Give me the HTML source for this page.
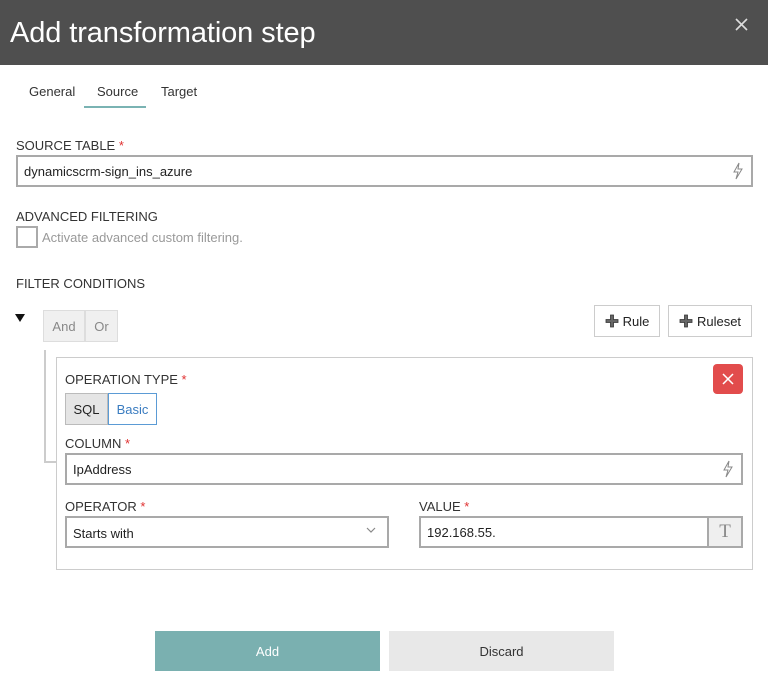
<!DOCTYPE html>
<html><head><style>
*{box-sizing:border-box;margin:0;padding:0}
body{width:768px;height:687px;background:#fff;font-family:"Liberation Sans",sans-serif;font-size:13px;color:#333;position:relative;overflow:hidden}
.a{position:absolute}
.lbl{position:absolute;font-size:13px;color:#333;letter-spacing:0}
.lbl b{color:#e03030;font-weight:normal}
.inp{position:absolute;border:2px solid #a9a9a9;background:#fff;font-size:13px;color:#222;padding-left:6px;display:flex;align-items:center}
.btn{position:absolute;border:1px solid #ccc;background:#fff;display:flex;align-items:center;justify-content:center;font-size:13px;color:#222}
</style></head><body>
<div class="a" style="left:0;top:0;width:768px;height:65px;background:#4f4f4f"></div>
<div class="a" style="left:10px;top:17px;font-size:29px;letter-spacing:-0.1px;color:#fff">Add transformation step</div>
<svg class="a" style="left:735px;top:18px" width="13" height="13"><path d="M1 1L12 12M12 1L1 12" stroke="#ddd" stroke-width="1.6"/></svg>

<div class="a" style="left:29px;top:84px;color:#333">General</div>
<div class="a" style="left:97px;top:84px;color:#333">Source</div>
<div class="a" style="left:161px;top:84px;color:#333">Target</div>
<div class="a" style="left:84px;top:106px;width:62px;height:2px;background:#7ab3b3"></div>

<div class="lbl" style="left:16px;top:138px">SOURCE TABLE <b>*</b></div>
<div class="inp" style="left:16px;top:155px;width:737px;height:32px">dynamicscrm-sign_ins_azure</div>
<svg class="a" style="left:732px;top:162px" width="12" height="18"><path d="M7 1L2 10H6L4 17L10 7H6Z" fill="none" stroke="#888" stroke-width="1"/></svg>

<div class="lbl" style="left:16px;top:209px">ADVANCED FILTERING</div>
<div class="a" style="left:16px;top:226px;width:22px;height:22px;border:2px solid #aaa"></div>
<div class="a" style="left:42px;top:230px;color:#999">Activate advanced custom filtering.</div>

<div class="lbl" style="left:16px;top:276px">FILTER CONDITIONS</div>
<div class="a" style="left:15px;top:314px;width:0;height:0;border-left:5px solid transparent;border-right:5px solid transparent;border-top:8px solid #111"></div>
<div class="btn" style="left:43px;top:310px;width:42px;height:32px;background:#f0f0f0;border-color:#ddd;color:#888">And</div>
<div class="btn" style="left:85px;top:310px;width:33px;height:32px;background:#f0f0f0;border-color:#ddd;color:#888">Or</div>

<div class="btn" style="left:594px;top:305px;width:66px;height:32px"><svg width="14" height="14" style="margin-right:4px"><path d="M5.5 1H8.5V5.5H13V8.5H8.5V13H5.5V8.5H1V5.5H5.5Z" fill="#666" stroke="#333" stroke-width="0.8"/></svg>Rule</div>
<div class="btn" style="left:668px;top:305px;width:84px;height:32px"><svg width="14" height="14" style="margin-right:4px"><path d="M5.5 1H8.5V5.5H13V8.5H8.5V13H5.5V8.5H1V5.5H5.5Z" fill="#666" stroke="#333" stroke-width="0.8"/></svg>Ruleset</div>

<div class="a" style="left:44px;top:350px;width:2px;height:113px;background:#ccc"></div>
<div class="a" style="left:44px;top:461px;width:12px;height:2px;background:#ccc"></div>
<div class="a" style="left:56px;top:357px;width:697px;height:213px;border:1px solid #ccc"></div>

<div class="a" style="left:713px;top:364px;width:30px;height:30px;background:#e24c4c;border-radius:4px"></div>
<svg class="a" style="left:722px;top:373px" width="12" height="12"><path d="M1 1L11 11M11 1L1 11" stroke="#fff" stroke-width="1.5"/></svg>

<div class="lbl" style="left:65px;top:372px">OPERATION TYPE <b>*</b></div>
<div class="btn" style="left:65px;top:393px;width:43px;height:32px;background:#e5e5e5;border-color:#bbb">SQL</div>
<div class="btn" style="left:108px;top:393px;width:49px;height:32px;border-color:#5b9bd5;color:#3a7cc0">Basic</div>

<div class="lbl" style="left:65px;top:436px">COLUMN <b>*</b></div>
<div class="inp" style="left:65px;top:453px;width:678px;height:32px">IpAddress</div>
<svg class="a" style="left:722px;top:460px" width="12" height="18"><path d="M7 1L2 10H6L4 17L10 7H6Z" fill="none" stroke="#888" stroke-width="1"/></svg>

<div class="lbl" style="left:65px;top:499px">OPERATOR <b>*</b></div>
<div class="inp" style="left:65px;top:516px;width:324px;height:32px;padding-top:3px">Starts with</div>
<svg class="a" style="left:366px;top:527px" width="10" height="7"><path d="M1 1L5 5L9 1" fill="none" stroke="#888" stroke-width="1.2"/></svg>

<div class="lbl" style="left:419px;top:499px">VALUE <b>*</b></div>
<div class="inp" style="left:419px;top:516px;width:324px;height:32px">192.168.55.</div>
<div class="a" style="left:707px;top:516px;width:36px;height:32px;background:#efefef;border:2px solid #a9a9a9;display:flex;align-items:center;justify-content:center;font-family:'Liberation Serif',serif;font-size:19px;color:#888">T</div>

<div class="a" style="left:155px;top:631px;width:225px;height:40px;background:#7ab0b0;color:#fff;display:flex;align-items:center;justify-content:center">Add</div>
<div class="a" style="left:389px;top:631px;width:225px;height:40px;background:#e8e8e8;color:#333;display:flex;align-items:center;justify-content:center">Discard</div>
</body></html>
